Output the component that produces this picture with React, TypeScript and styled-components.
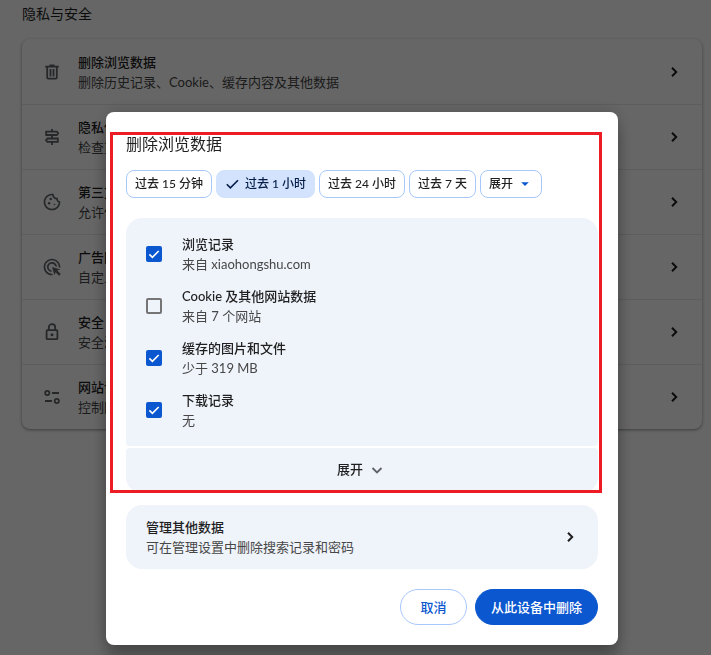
import React, { useState } from 'react';
import styled, { createGlobalStyle } from 'styled-components';
import { MdAdsClick, MdOutlineCookie } from 'react-icons/md';

const GlobalStyle = createGlobalStyle`
  * { box-sizing: border-box; }
  html, body { margin: 0; }
  body {
    min-height: 100vh;
    background: #fff;
    color: #1f1f1f;
    font-family: Lato, "Noto Sans CJK SC", sans-serif;
    font-size: 13px;
    line-height: 20px;
  }
  button, input { font: inherit; color: inherit; margin: 0; }
`;

const Page = styled.main`
  padding: 4px 9px 24px 22px;
`;

const SectionHeading = styled.h2`
  margin: 0 0 15px;
  font-size: 14px;
  font-weight: 400;
  line-height: 20px;
`;

const Card = styled.div`
  border-radius: 8px;
  overflow: hidden;
  box-shadow: 0 1px 2px rgba(60, 64, 67, 0.3), 0 1px 3px 1px rgba(60, 64, 67, 0.2);
`;

const SettingRow = styled.button`
  display: flex;
  align-items: center;
  gap: 16px;
  width: 100%;
  height: 65px;
  padding: 0 18px 0 20px;
  border: 0;
  background: none;
  text-align: left;
  & + & { border-top: 1px solid #e6e8eb; }
`;

const RowIcon = styled.span`
  display: flex;
  flex: none;
  color: #5f6368;
`;

const TextBlock = styled.span`
  display: flex;
  flex: 1;
  flex-direction: column;
  min-width: 0;
  white-space: nowrap;
`;

const Label = styled.span`
  font-weight: 500;
`;

const SubLabel = styled.span`
  color: #474747;
`;

const Overlay = styled.div`
  position: fixed;
  inset: 0;
  display: flex;
  justify-content: center;
  align-items: flex-start;
  padding: 112px 9px 10px 22px;
  background: rgba(0, 0, 0, 0.6);
`;

const Dialog = styled.section`
  width: 100%;
  max-width: 512px;
  padding: 20px;
  border-radius: 8px;
  background: #fff;
  box-shadow: 0 0 16px rgba(0, 0, 0, 0.2), 0 16px 16px rgba(0, 0, 0, 0.24);
`;

const Highlighted = styled.div`
  position: relative;
  &::after {
    content: "";
    position: absolute;
    inset: 0 -4px 0 -16px;
    border: 3px solid #ed1c24;
    pointer-events: none;
  }
`;

const DialogTitle = styled.h1`
  margin: 0 0 14px;
  font-size: 16px;
  font-weight: 400;
  line-height: 24px;
`;

const ChipRow = styled.div`
  display: flex;
  flex-wrap: wrap;
  gap: 4px;
  margin-bottom: 20px;
`;

const Chip = styled.button<{ $selected?: boolean }>`
  display: flex;
  align-items: center;
  gap: 4px;
  height: 28px;
  padding: 0 8px;
  border: 1px solid ${(p) => (p.$selected ? '#d3e3fd' : '#a8c7fa')};
  border-radius: 8px;
  background: ${(p) => (p.$selected ? '#d3e3fd' : '#fff')};
  color: ${(p) => (p.$selected ? '#041e49' : '#1f1f1f')};
  font-size: 12px;
  font-weight: 500;
  white-space: nowrap;
`;

const ChipArrow = styled.svg`
  fill: #0b57d0;
`;

const OptionPanel = styled.div`
  padding: 10px 20px;
  border-radius: 16px 16px 4px 4px;
  background: #eff3fa;
`;

const Option = styled.label`
  display: flex;
  align-items: center;
  gap: 20px;
  padding: 6px 0;
`;

const CheckSlot = styled.span`
  display: grid;
  flex: none;
  width: 16px;
  height: 16px;
  & > * { grid-area: 1 / 1; }
  & > svg { pointer-events: none; }
`;

const CheckInput = styled.input`
  appearance: none;
  width: 16px;
  height: 16px;
  border: 2px solid #757575;
  border-radius: 2px;
  background: transparent;
  &:checked { border-color: #0b57d0; background: #0b57d0; }
`;

const ExpandButton = styled.button`
  display: flex;
  align-items: center;
  justify-content: center;
  gap: 4px;
  width: 100%;
  height: 45px;
  margin-top: 2px;
  padding: 0 0 4px;
  border: 0;
  border-radius: 4px 4px 16px 16px;
  background: #eff3fa;
  font-weight: 500;
`;

const ManageButton = styled.button`
  display: flex;
  align-items: center;
  width: 100%;
  margin-top: 12px;
  padding: 12px 18px 12px 20px;
  border: 0;
  border-radius: 16px;
  background: #eff3fa;
  text-align: left;
`;

const Actions = styled.div`
  display: flex;
  justify-content: flex-end;
  gap: 8px;
  margin-top: 20px;
`;

const ActionButton = styled.button<{ $primary?: boolean }>`
  min-width: 67px;
  height: 36px;
  padding: 0 15px;
  border: 1px solid ${(p) => (p.$primary ? '#0b57d0' : '#a8c7fa')};
  border-radius: 18px;
  background: ${(p) => (p.$primary ? '#0b57d0' : '#fff')};
  color: ${(p) => (p.$primary ? '#fff' : '#0b57d0')};
  font-weight: 500;
`;

const Chevron = () => (
  <svg width="20" height="20" viewBox="0 0 20 20" fill="none" stroke="#1f1f1f" strokeWidth="2" aria-hidden="true">
    <path d="m8 5.8 4.2 4.2L8 14.2" />
  </svg>
);

const lineIcon = {
  width: 20,
  height: 20,
  viewBox: '0 0 20 20',
  fill: 'none',
  stroke: 'currentColor',
  strokeWidth: 1.8,
  'aria-hidden': true,
} as const;

const TrashIcon = () => (
  <svg {...lineIcon}>
    <path d="M3.2 4.7h13.6M7.5 3.4h5M5.2 5v10.6q0 1 1 1h7.6q1 0 1-1V5M8.5 7v7.5M11.5 7v7.5" />
  </svg>
);

const SignpostIcon = () => (
  <svg {...lineIcon}>
    <path d="M10 2v2.4M10 8.3v2.9M10 15.2V18M4.2 4.6h10.6l1.4 1.7-1.4 1.7H4.2ZM15.8 11.5H5.4L4 13.2l1.4 1.7h10.4Z" />
  </svg>
);

const LockIcon = () => (
  <svg {...lineIcon}>
    <rect x="4.6" y="8.2" width="10.8" height="9" rx="0.8" />
    <path d="M6.8 8V5.4a3.2 3.2 0 0 1 6.4 0V8" />
    <circle cx="10" cy="12.7" r="1.5" fill="currentColor" stroke="none" />
  </svg>
);

const TuneIcon = () => (
  <svg {...lineIcon}>
    <circle cx="5.3" cy="6" r="2.1" />
    <circle cx="14.8" cy="14" r="2.1" />
    <path d="M10 6h7M3 14h7" />
  </svg>
);

const settings = [
  { icon: <TrashIcon />, title: '删除浏览数据', detail: '删除历史记录、Cookie、缓存内容及其他数据' },
  { icon: <SignpostIcon />, title: '隐私保护指南', detail: '检查重要的隐私保护和安全控制设置' },
  { icon: <MdOutlineCookie size={20} />, title: '第三方 Cookie', detail: '允许使用第三方 Cookie' },
  { icon: <MdAdsClick size={20} />, title: '广告隐私权设置', detail: '自定义网站用来向您展示广告的信息' },
  { icon: <LockIcon />, title: '安全', detail: '安全浏览(保护您免受危险网站的侵害)和其他安全设置' },
  { icon: <TuneIcon />, title: '网站设置', detail: '控制网站可以使用和显示什么信息' },
];

const periods = ['过去 15 分钟', '过去 1 小时', '过去 24 小时', '过去 7 天'];

const options = [
  { title: '浏览记录', detail: '来自 xiaohongshu.com', on: true },
  { title: 'Cookie 及其他网站数据', detail: '来自 7 个网站', on: false },
  { title: '缓存的图片和文件', detail: '少于 319 MB', on: true },
  { title: '下载记录', detail: '无', on: true },
];

export default function App() {
  const [period, setPeriod] = useState(1);
  const [checked, setChecked] = useState(options.map((o) => o.on));

  return (
    <>
      <GlobalStyle />
      <Page>
        <SectionHeading>隐私与安全</SectionHeading>
        <Card>
          {settings.map((s) => (
            <SettingRow key={s.title} type="button">
              <RowIcon>{s.icon}</RowIcon>
              <TextBlock>
                <Label>{s.title}</Label>
                <SubLabel>{s.detail}</SubLabel>
              </TextBlock>
              <Chevron />
            </SettingRow>
          ))}
        </Card>
      </Page>
      <Overlay>
        <Dialog role="dialog" aria-modal="true" aria-labelledby="dialog-title">
          <Highlighted>
            <DialogTitle id="dialog-title">删除浏览数据</DialogTitle>
            <ChipRow>
              {periods.map((name, i) => (
                <Chip
                  key={name}
                  type="button"
                  aria-pressed={i === period}
                  $selected={i === period}
                  onClick={() => setPeriod(i)}
                >
                  {i === period && (
                    <svg width="16" height="16" viewBox="0 0 16 16" fill="none" stroke="currentColor" strokeWidth="1.6" aria-hidden="true">
                      <path d="m1.8 8.2 3.6 3.6 7.6-7.6" />
                    </svg>
                  )}
                  {name}
                </Chip>
              ))}
              <Chip type="button" aria-haspopup="menu">
                展开
                <ChipArrow width="16" height="16" viewBox="0 0 16 16" aria-hidden="true">
                  <path d="M4.2 6.2h7.6L8 10z" />
                </ChipArrow>
              </Chip>
            </ChipRow>
            <OptionPanel>
              {options.map((o, i) => (
                <Option key={o.title}>
                  <CheckSlot>
                    <CheckInput
                      type="checkbox"
                      checked={checked[i]}
                      onChange={() => setChecked(checked.map((c, n) => (n === i ? !c : c)))}
                    />
                    {checked[i] && (
                      <svg width="16" height="16" viewBox="0 0 16 16" fill="none" stroke="#fff" strokeWidth="1.6" aria-hidden="true">
                        <path d="m3.4 8.4 3 3 6.3-6.4" />
                      </svg>
                    )}
                  </CheckSlot>
                  <TextBlock>
                    <Label>{o.title}</Label>
                    <SubLabel>{o.detail}</SubLabel>
                  </TextBlock>
                </Option>
              ))}
            </OptionPanel>
            <ExpandButton type="button" aria-expanded="false">
              展开
              <svg width="20" height="20" viewBox="0 0 20 20" fill="none" stroke="#5f6368" strokeWidth="1.8" aria-hidden="true">
                <path d="m5.5 9 4.5 4.5L14.5 9" />
              </svg>
            </ExpandButton>
          </Highlighted>
          <ManageButton type="button">
            <TextBlock>
              <Label>管理其他数据</Label>
              <SubLabel>可在管理设置中删除搜索记录和密码</SubLabel>
            </TextBlock>
            <Chevron />
          </ManageButton>
          <Actions>
            <ActionButton type="button">取消</ActionButton>
            <ActionButton type="button" $primary>从此设备中删除</ActionButton>
          </Actions>
        </Dialog>
      </Overlay>
    </>
  );
}
